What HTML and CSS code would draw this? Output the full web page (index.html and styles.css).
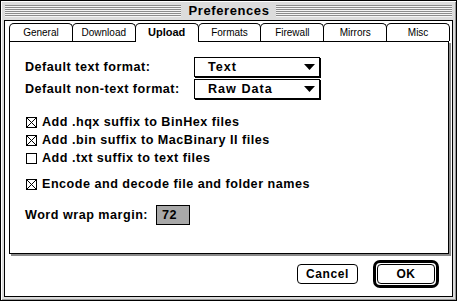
FILE: index.html
```html
<!DOCTYPE html>
<html>
<head>
<meta charset="utf-8">
<link rel="stylesheet" href="styles.css">
</head>
<body>
<div class="window">
  <div class="titlebar">
    <span class="stripes"></span>
    <span class="title">Preferences</span>
    <span class="stripes"></span>
  </div>
  <div class="content">
    <div class="tabs">
      <div class="tab">General</div>
      <div class="tab">Download</div>
      <div class="tab active">Upload</div>
      <div class="tab">Formats</div>
      <div class="tab">Firewall</div>
      <div class="tab">Mirrors</div>
      <div class="tab">Misc</div>
    </div>
    <div class="panel">
      <div class="popups">
        <div class="field-row">
          <span class="label">Default text format:</span>
          <div class="popup"><span class="popup-text">Text</span><svg class="arrow" width="11" height="6" viewBox="0 0 11 6"><path d="M0 0H11L5.5 6Z" fill="#000"/></svg></div>
        </div>
        <div class="field-row">
          <span class="label">Default non-text format:</span>
          <div class="popup"><span class="popup-text">Raw Data</span><svg class="arrow" width="11" height="6" viewBox="0 0 11 6"><path d="M0 0H11L5.5 6Z" fill="#000"/></svg></div>
        </div>
      </div>
      <div class="checks">
        <div class="check"><svg class="box" width="11" height="11" viewBox="0 0 11 11"><rect x="0.5" y="0.5" width="10" height="10" fill="#fff" stroke="#000"/><path d="M1 1L10 10M10 1L1 10" stroke="#000" stroke-width="1"/></svg><span>Add .hqx suffix to BinHex files</span></div>
        <div class="check"><svg class="box" width="11" height="11" viewBox="0 0 11 11"><rect x="0.5" y="0.5" width="10" height="10" fill="#fff" stroke="#000"/><path d="M1 1L10 10M10 1L1 10" stroke="#000" stroke-width="1"/></svg><span>Add .bin suffix to MacBinary II files</span></div>
        <div class="check"><svg class="box" width="11" height="11" viewBox="0 0 11 11"><rect x="0.5" y="0.5" width="10" height="10" fill="#fff" stroke="#000"/></svg><span>Add .txt suffix to text files</span></div>
      </div>
      <div class="check single"><svg class="box" width="11" height="11" viewBox="0 0 11 11"><rect x="0.5" y="0.5" width="10" height="10" fill="#fff" stroke="#000"/><path d="M1 1L10 10M10 1L1 10" stroke="#000" stroke-width="1"/></svg><span>Encode and decode file and folder names</span></div>
      <div class="wrap-row">
        <span class="wrap-label">Word wrap margin:</span>
        <div class="textfield">72</div>
      </div>
    </div>
    <div class="buttons">
      <div class="btn cancel">Cancel</div>
      <div class="ring"><div class="btn ok">OK</div></div>
    </div>
  </div>
</div>
</body>
</html>
```
FILE: styles.css
```css
* { box-sizing: border-box; }
html, body { margin: 0; padding: 0; background: #fff; }
body { width: 457px; height: 301px; overflow: hidden; font-family: "Liberation Sans", Arial, sans-serif; color: #000; }

.window {
  width: 457px;
  height: 301px;
  border: 1px solid #000;
  background: #dcdcdc;
  box-shadow: inset 1px 1px 0 #fff, inset -1px -1px 0 #999;
  padding: 0 3px 3px 3px;
  display: flex;
  flex-direction: column;
}

.titlebar {
  height: 19px;
  display: flex;
  align-items: center;
  padding: 0 1px;
}
.stripes {
  flex: 1;
  height: 12px;
  background: repeating-linear-gradient(to bottom, #8c8c8c 0 1px, #f4f4f4 1px 2px);
}
.title {
  font-weight: bold;
  font-size: 13px;
  letter-spacing: 0.6px;
  padding: 0 6px 0 7px;
  line-height: 16px;
}

.content {
  flex: 1;
  background: #fff;
  border: 1px solid #000;
  padding: 2px 2px 0 4px;
  display: flex;
  flex-direction: column;
}

.tabs {
  display: flex;
  height: 18px;
  padding-right: 1px;
}
.tab {
  flex: 1;
  position: relative;
  border: 1px solid #000;
  border-bottom: none;
  border-radius: 5px 5px 0 0;
  margin-right: -1px;
  background: #fff;
  font-size: 10px;
  text-align: center;
  line-height: 17px;
}
.tab.active {
  font-weight: bold;
  font-size: 11px;
  z-index: 2;
  height: 19px;
}

.panel {
  height: 213px;
  border: 1px solid #000;
  box-shadow: 2px 2px 0 #8a8a8a;
  margin-right: 1px;
  padding: 15px 0 0 15px;
  font-weight: bold;
  font-size: 12.6px;
  letter-spacing: 0.5px;
}

.popups { display: flex; flex-direction: column; gap: 2px; }
.field-row { display: flex; align-items: center; height: 20px; }
.label { width: 169px; white-space: nowrap; }
.popup {
  width: 126px;
  height: 20px;
  border: 1px solid #000;
  box-shadow: 1px 1px 0 #000;
  display: flex;
  align-items: center;
  justify-content: space-between;
  padding: 0 4px 0 13px;
}
.popup-text { letter-spacing: 1px; }

.checks { margin-top: 14px; display: flex; flex-direction: column; }
.check { display: flex; align-items: center; height: 18px; padding-left: 1px; white-space: nowrap; }
.box { margin-right: 5px; flex: none; }
.check.single { margin-top: 8px; }

.wrap-row { display: flex; align-items: center; margin-top: 12px; height: 20px; }
.wrap-label { width: 131px; white-space: nowrap; }
.textfield {
  width: 34px;
  height: 20px;
  border: 1px solid #000;
  background: #a8a8a8;
  padding-left: 5px;
  line-height: 18px;
}

.buttons {
  display: flex;
  justify-content: flex-end;
  align-items: center;
  gap: 15px;
  padding: 6px 11px 0 0;
}
.btn {
  font-weight: bold;
  font-size: 12px;
  letter-spacing: 0.6px;
  border: 1px solid #000;
  border-radius: 4px;
  text-align: center;
  background: #fff;
}
.cancel { width: 61px; height: 20px; line-height: 18px; }
.ring {
  border: 3px solid #000;
  border-radius: 7px;
  padding: 1px;
}
.ok { width: 58px; height: 20px; line-height: 18px; }
```
